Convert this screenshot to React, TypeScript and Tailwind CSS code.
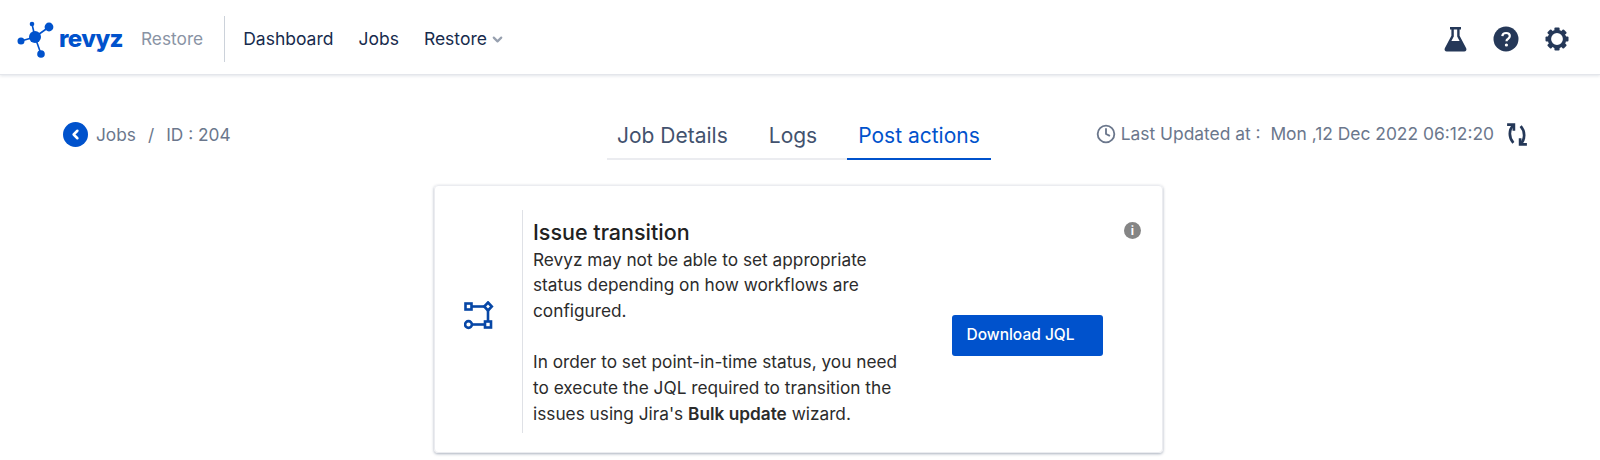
import { ChevronDown, ChevronLeft, Clock } from "lucide-react";

const font = "font-['Inter','Noto_Sans',sans-serif]";

function Logo() {
  return (
    <svg width="38" height="40" viewBox="0 0 38 40" className="shrink-0">
      <g stroke="#0052cc" strokeWidth="1.6">
        <line x1="18" y1="18" x2="32" y2="8" />
        <line x1="18" y1="18" x2="4" y2="22" />
        <line x1="18" y1="18" x2="15" y2="5" />
        <line x1="18" y1="18" x2="24" y2="35" />
      </g>
      <circle cx="18" cy="18" r="6" fill="#0052cc" />
      <circle cx="32" cy="8" r="4.4" fill="#0052cc" />
      <circle cx="4" cy="22" r="3.5" fill="#0052cc" />
      <circle cx="15" cy="5" r="2.3" fill="#0052cc" />
      <circle cx="24" cy="35" r="3.8" fill="#0052cc" />
    </svg>
  );
}

function FlaskIcon() {
  return (
    <svg width="23" height="26" viewBox="0 0 23 26">
      <path d="M6 1h11v2.4h-1.4v6.4l6.6 12.4c.7 1.5-.2 3.3-2 3.3H2.800c-1.800 0-2.700-1.800-2-3.300L7.400 9.800V3.400H6Z" fill="#253858" />
      <path d="M9.800 3.400h3.400v7l2.400 4.600H7.400l2.400-4.600Z" fill="#fff" />
    </svg>
  );
}

function HelpIcon() {
  return (
    <svg width="26" height="26" viewBox="0 0 26 26">
      <circle cx="13" cy="13" r="12.5" fill="#253858" />
      <path d="M9.300 10.200c.2-2 1.700-3.200 3.800-3.200 2.200 0 3.700 1.300 3.700 3.100 0 1.400-.8 2.200-1.900 2.900-1 .6-1.400 1.100-1.400 2.200" fill="none" stroke="#fff" strokeWidth="2.200" />
      <circle cx="13.400" cy="19" r="1.600" fill="#fff" />
    </svg>
  );
}

function GearIcon() {
  const teeth = [0, 45, 90, 135, 180, 225, 270, 315];
  return (
    <svg width="24" height="24" viewBox="0 0 24 24">
      <circle cx="12" cy="12" r="7.600" fill="none" stroke="#253858" strokeWidth="3.400" />
      {teeth.map((deg) => (
        <rect key={deg} x="9.400" y="0.500" width="5.200" height="4" rx="1" fill="#253858" transform={`rotate(${deg} 12 12)`} />
      ))}
    </svg>
  );
}

function RefreshIcon() {
  return (
    <svg width="22" height="25" viewBox="0 0 21 24" fill="none" stroke="#253858" strokeWidth="2.600">
      <path d="M1 2.500h6.500v6" />
      <path d="M7 3C2.500 7.500 2.500 15 7 20" />
      <path d="M20 21.500h-6.500v-6" />
      <path d="M14 21c4.500-4.500 4.500-12 0-17" />
    </svg>
  );
}

function WorkflowIcon() {
  return (
    <svg width="30" height="30" viewBox="0 0 30 30" fill="none" stroke="#0747a6" strokeWidth="2.600">
      <rect x="1.500" y="2.500" width="6" height="6" />
      <path d="M7.500 5.500h13" />
      <path d="M24 1.500 27.800 5.500 24 9.500 20.200 5.500Z" />
      <path d="M24 9.500v11" />
      <circle cx="4.500" cy="23.500" r="3.400" />
      <path d="M8 23.500h13" />
      <rect x="21" y="20.500" width="6" height="6" />
    </svg>
  );
}

export default function App() {
  return (
    <div className={`${font} h-[460px] w-[1600px] overflow-hidden bg-white`}>
      {/* Top bar */}
      <header className="flex h-[75px] items-center justify-between border-b border-[#e4e6eb] pl-[17px] pr-[31px] pt-[4px] shadow-[0_1px_3px_rgba(9,30,66,0.12)]">
        <div className="flex items-center">
          <div className="flex items-center gap-[4px]">
            <Logo />
            <span className="text-[24px] font-extrabold leading-none tracking-tight text-[#0052cc]">revyz</span>
          </div>
          <span className="ml-[18px] text-[17.3px] text-[#8993a4]">Restore</span>
          <div className="ml-[21px] h-[46px] w-[1px] bg-[#ccd2da]" />
          <nav className="ml-[18px] flex items-center gap-[25px] text-[17.5px] text-[#172b4d]">
            <span>Dashboard</span>
            <span>Jobs</span>
            <span className="flex items-center gap-[3px]">
              Restore
              <ChevronDown size={15} strokeWidth={3.500} className="text-[#97a0af]" />
            </span>
          </nav>
        </div>
        <div className="flex items-center gap-[26px]">
          <FlaskIcon />
          <HelpIcon />
          <GearIcon />
        </div>
      </header>

      {/* Breadcrumb, tabs, last updated */}
      <div className="mt-[46px] grid grid-cols-[1fr_384px_1fr] items-start pl-[63px] pr-[65px]">
        <div className="flex items-center pt-[1px] text-[17.3px] text-[#6b778c]">
          <span className="flex h-[25px] w-[25px] items-center justify-center rounded-full bg-[#0052cc]">
            <ChevronLeft size={15} strokeWidth={4} className="text-white" />
          </span>
          <span className="ml-[8px]">Jobs</span>
          <span className="ml-[12px]">/</span>
          <span className="ml-[12px]">ID : 204</span>
        </div>
        <div className="-mt-[1px] flex h-[40px] border-b-2 border-[#ebecf0] text-[21px] text-[#42526e]">
          <span className="px-[10px]">Job Details</span>
          <span className="ml-[21px] px-[10px]">Logs</span>
          <span className="-mb-[2px] ml-[20px] flex-1 border-b-2 border-[#0052cc] pl-[11px] text-[#0052cc]">Post actions</span>
        </div>
        <div className="flex items-center justify-end pr-[7px] text-[17.4px] text-[#6b778c]">
          <Clock size={20} strokeWidth={2.200} />
          <span className="ml-[5px] whitespace-pre">Last Updated at :  Mon ,12 Dec 2022 06:12:20</span>
          <span className="ml-[12px]">
            <RefreshIcon />
          </span>
        </div>
      </div>

      {/* Post action card */}
      <div className="mt-[25px] flex justify-center">
        <div className="relative mr-[3px] flex h-[268px] w-[729px] items-center rounded-[4px] border border-[#ebecf0] pt-[4px] shadow-[0_1px_3px_rgba(9,30,66,0.35)]">
          <div className="flex w-[87px] justify-center pb-[10px]">
            <WorkflowIcon />
          </div>
          <div className="h-[223px] w-[385px] border-l border-[#dfe1e6] pl-[10px]">
            <h3 className="mt-[7px] text-[21.5px] font-medium leading-[30px] text-[#212121]">Issue transition</h3>
            <p className="w-[372px] text-[17.25px] leading-[25.7px] text-[#2b2b2b]">
              Revyz may not be able to set appropriate status depending on how workflows are configured.
            </p>
            <p className="mt-[25.7px] w-[372px] text-[17.25px] leading-[25.7px] text-[#2b2b2b]">
              In order to set point-in-time status, you need to execute the JQL required to transition the issues using Jira's <b className="font-semibold">Bulk update</b> wizard.
            </p>
          </div>
          <button className="ml-[45px] mt-[28px] h-[41px] w-[151px] rounded-[3px] bg-[#0052cc] pr-[14px] text-[15.500px] font-medium text-white">
            Download JQL
          </button>
          <span className="absolute right-[21px] top-[36px] flex h-[17px] w-[17px] items-center justify-center rounded-full bg-[#858585] text-[12px] font-bold leading-none text-white">
            i
          </span>
        </div>
      </div>
    </div>
  );
}
